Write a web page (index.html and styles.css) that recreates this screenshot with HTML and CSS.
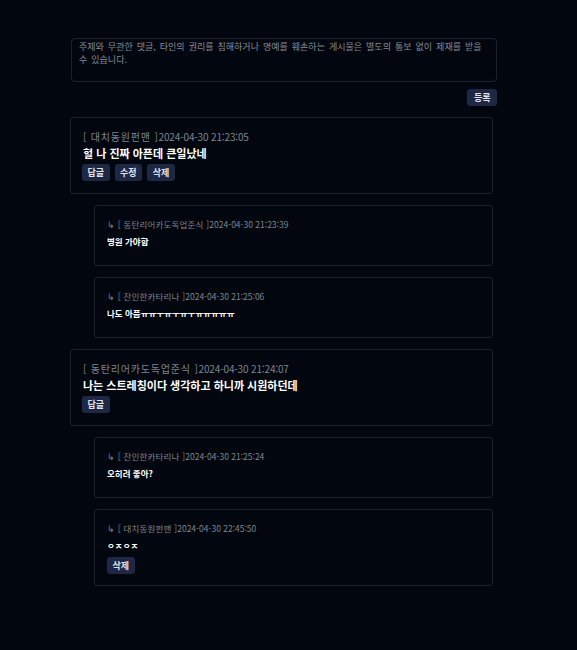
FILE: index.html
```html
<!DOCTYPE html>
<html lang="ko">
<head>
<meta charset="utf-8">
<title>댓글</title>
<link rel="stylesheet" href="styles.css">
</head>
<body>
<div class="wrap">
  <textarea class="input" placeholder="주제와 무관한 댓글, 타인의 권리를 침해하거나 명예를 훼손하는 게시물은 별도의 통보 없이 제재를 받을 수 있습니다."></textarea>
  <div class="submit-row"><button class="btn btn-submit">등록</button></div>
  <div class="list">
    <div class="comment">
      <div class="meta"><span class="name">[ 대치동원펀맨 ]</span><span class="date">2024-04-30 21:23:05</span></div>
      <div class="text">헐 나 진짜 아픈데 큰일났네</div>
      <div class="actions"><button class="btn">답글</button><button class="btn">수정</button><button class="btn">삭제</button></div>
    </div>
    <div class="comment reply">
      <div class="meta"><span class="name">↳ [ 동탄리어카도독업준식 ]</span><span class="date">2024-04-30 21:23:39</span></div>
      <div class="text">병원 가야함</div>
    </div>
    <div class="comment reply">
      <div class="meta"><span class="name">↳ [ 잔인한카타리나 ]</span><span class="date">2024-04-30 21:25:06</span></div>
      <div class="text">나도 아픔ㅠㅠㅜㅠㅜㅠㅜㅠㅠㅠㅠㅠ</div>
    </div>
    <div class="comment">
      <div class="meta"><span class="name">[ 동탄리어카도독업준식 ]</span><span class="date">2024-04-30 21:24:07</span></div>
      <div class="text">나는 스트레칭이다 생각하고 하니까 시원하던데</div>
      <div class="actions"><button class="btn">답글</button></div>
    </div>
    <div class="comment reply">
      <div class="meta"><span class="name">↳ [ 잔인한카타리나 ]</span><span class="date">2024-04-30 21:25:24</span></div>
      <div class="text">오히려 좋아?</div>
    </div>
    <div class="comment reply has-actions">
      <div class="meta"><span class="name">↳ [ 대치동원펀맨 ]</span><span class="date">2024-04-30 22:45:50</span></div>
      <div class="text">ㅇㅈㅇㅈ</div>
      <div class="actions"><button class="btn">삭제</button></div>
    </div>
  </div>
</div>
</body>
</html>
```
FILE: styles.css
```css
html, body {
  margin: 0;
  background: #02070f;
  font-family: "Noto Sans CJK KR", "Noto Sans", sans-serif;
}
.wrap {
  margin-left: 70px;
  width: 427px;
  padding-top: 38px;
}
.input {
  display: block;
  margin-left: 1px;
  width: 426px;
  height: 44px;
  box-sizing: border-box;
  border: 1px solid #1a212b;
  border-radius: 4px;
  background: #02070f;
  padding: 2px 7px;
  font-family: "Noto Sans CJK KR", sans-serif;
  font-size: 9px;
  line-height: 12.5px;
  color: #8b9099;
  resize: none;
  outline: none;
}
.input::placeholder {
  color: #858a94;
  word-spacing: 1.5px;
}
.submit-row {
  display: flex;
  justify-content: flex-end;
  margin-top: 7px;
}
.btn {
  height: 17px;
  padding: 0 5.5px;
  background: #1e2744;
  border: 0;
  border-radius: 3px;
  color: #dfe3ee;
  font-family: "Noto Sans CJK KR", sans-serif;
  font-weight: bold;
  font-size: 9px;
  line-height: 17px;
}
.btn-submit {
  padding: 0 6.5px;
}
.list {
  width: 423px;
  margin-top: 11px;
  display: flex;
  flex-direction: column;
  gap: 11px;
}
.comment {
  border: 1px solid #1a212b;
  border-radius: 3px;
  padding: 11px 12px 12px;
}
.meta {
  font-size: 10px;
  line-height: 15px;
  color: #7f848d;
}
.name {
  letter-spacing: 0.8px;
}
.date {
  letter-spacing: -0.15px;
}
.text {
  font-size: 11px;
  font-weight: bold;
  color: #ffffff;
  line-height: 15px;
  margin-top: 2px;
}
.actions {
  display: flex;
  gap: 5px;
  margin-top: 3px;
  margin-left: -1px;
}
.reply {
  margin-left: 24px;
  padding: 12px 12px 18px;
}
.reply.has-actions {
  padding-bottom: 11px;
}
.reply .meta {
  font-size: 8.5px;
  line-height: 12px;
}
.reply .name {
  letter-spacing: 0.2px;
}
.reply .date {
  letter-spacing: 0;
}
.reply .text {
  font-size: 8.5px;
  line-height: 12px;
  margin-top: 5px;
}
.reply .actions {
  margin-top: 6px;
  margin-left: 0;
}
```
